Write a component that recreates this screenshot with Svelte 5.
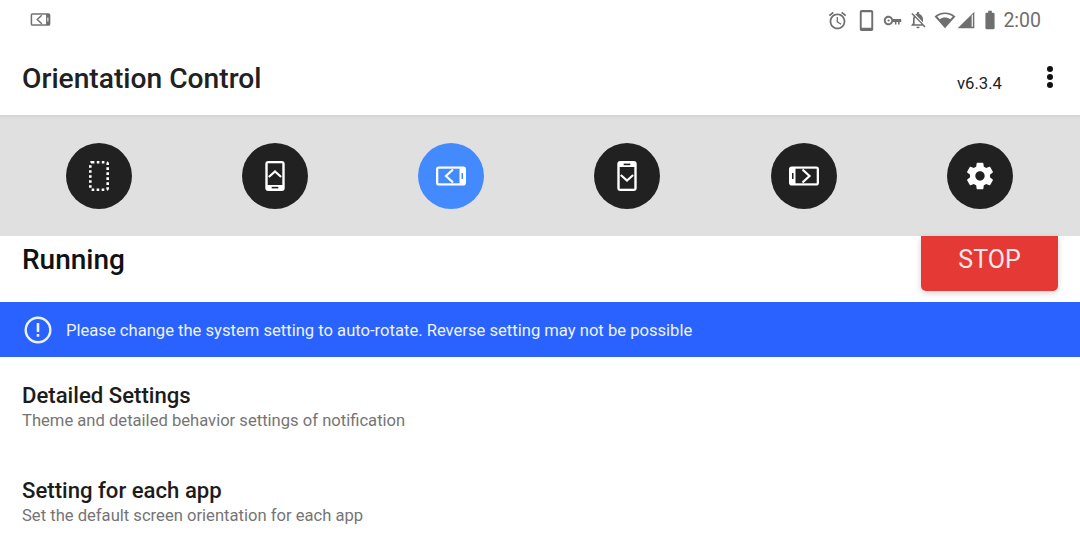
<script lang="ts">
  const modes = [
    { id: 'free', active: false },
    { id: 'up', active: false },
    { id: 'left', active: true },
    { id: 'down', active: false },
    { id: 'right', active: false },
    { id: 'settings', active: false }
  ];
</script>

{#snippet landscape(dir: string)}
  <rect x="1" y="6.500" width="30" height="19" rx="2.800" fill="currentColor" />
  {#if dir === 'left'}
    <rect x="3.300" y="8.700" width="21.200" height="14.600" fill="var(--ic-bg)" />
    <rect x="26.500" y="13" width="1.500" height="6" fill="var(--ic-bg)" />
    <path d="M18 9.500 11 16l7 6.500" stroke="currentColor" stroke-width="2.200" fill="none" />
  {:else}
    <rect x="7.500" y="8.700" width="21.200" height="14.600" fill="var(--ic-bg)" />
    <rect x="4" y="13" width="1.500" height="6" fill="var(--ic-bg)" />
    <path d="M14.500 9.500 21.500 16l-7 6.500" stroke="currentColor" stroke-width="2.200" fill="none" />
  {/if}
{/snippet}

<div class="screen">
  <div class="status">
    <svg class="st-mode" viewBox="0 0 32 32">
      {@render landscape('left')}
    </svg>
    <div class="st-right">
      <svg class="st" viewBox="0 0 24 24"><path d="M22 5.720l-4.600-3.860-1.290 1.530 4.600 3.860L22 5.720zM7.880 3.390L6.600 1.860 2 5.710l1.290 1.530 4.590-3.850zM12.500 8H11v6l4.750 2.850.75-1.230-4-2.370V8zM12 4c-4.970 0-9 4.030-9 9s4.020 9 9 9c4.970 0 9-4.030 9-9s-4.030-9-9-9zm0 16c-3.870 0-7-3.130-7-7s3.130-7 7-7 7 3.130 7 7-3.130 7-7 7z" /></svg>
      <svg class="st phone" viewBox="0 0 24 24"><path d="M17 1H7c-1.100 0-2 .9-2 2v18c0 1.100.9 2 2 2h10c1.100 0 2-.9 2-2V3c0-1.100-.9-2-2-2zm0 18.500H7V3.500h10v16z" /></svg>
      <svg class="st key" viewBox="0 0 24 24"><path d="M12.650 10C11.830 7.670 9.610 6 7 6c-3.310 0-6 2.690-6 6s2.690 6 6 6c2.610 0 4.830-1.670 5.650-4H15v3h2v-3h2v3h2v-3h2v-4H12.650zM7 15.600c-2 0-3.600-1.600-3.600-3.600S5 8.400 7 8.400s3.600 1.600 3.600 3.600S9 15.600 7 15.600zm0-2.200a1.400 1.400 0 1 0 0-2.800 1.400 1.400 0 0 0 0 2.800z" fill-rule="evenodd" /></svg>
      <svg class="st bell" viewBox="0 0 24 24"><path d="M20 18.690L7.840 6.140 5.270 3.490 4 4.760l2.800 2.800v.01c-.52.990-.8 2.160-.8 3.420v5l-2 2v1h13.730l2 2L21 19.720l-1-1.030zM12 22c1.110 0 2-.89 2-2h-4c0 1.110.89 2 2 2zm6-7.320V11c0-3.080-1.640-5.640-4.500-6.320V4c0-.83-.67-1.500-1.500-1.500s-1.500.67-1.500 1.500v.68c-.15.030-.29.080-.42.120-.1.030-.2.070-.3.110-.01 0-.02 0-.3.010-.23.090-.46.200-.68.310 0 0-.01 0-.1.010L18 14.680zM8 17v-6c0-.73.130-1.420.380-2.020L16.400 17H8z" /></svg>
      <svg class="st wifi" viewBox="0 0 24 24"><path d="M12 21 .6 8.100C3.600 5.400 7.600 3.800 12 3.800s8.400 1.600 11.400 4.300L12 21zM3.600 8.300l2.700 3c1.500-1.200 3.500-1.900 5.700-1.900s4.200.7 5.700 1.900l2.700-3C18.200 6.300 15.300 5.400 12 5.400S5.800 6.300 3.600 8.300z" fill-rule="evenodd" /></svg>
      <svg class="st signal" viewBox="0 0 24 24"><path d="M22 22V2L2 22h20zm-1.800-1.800h-1.400V6.500l1.400-1.400v15.100z" fill-rule="evenodd" /></svg>
      <svg class="st batt" viewBox="0 0 24 24"><path d="M15.670 4H14V2h-4v2H8.330C7.600 4 7 4.600 7 5.330v15.330C7 21.400 7.600 22 8.330 22h7.330c.74 0 1.340-.6 1.340-1.330V5.330C17 4.600 16.400 4 15.670 4z" /></svg>
      <span class="clock">2:00</span>
    </div>
  </div>

  <header class="appbar">
    <h1>Orientation Control</h1>
    <span class="version">v6.3.4</span>
    <div class="more"><i></i><i></i><i></i></div>
  </header>

  <nav class="modes">
    {#each modes as m}
      <div class="cell">
        <div class="mode" class:active={m.active}>
          {#if m.id === 'free'}
            <svg viewBox="0 0 32 32" class="ic">
              <rect x="7.300" y="2.300" width="17.400" height="27.400" rx="1.500" fill="none" stroke="currentColor" stroke-width="2.600" stroke-dasharray="2.600 2.400" />
            </svg>
          {:else if m.id === 'up'}
            <svg viewBox="0 0 32 32" class="ic">
              <rect x="6.300" y="1" width="19.400" height="30" rx="3" fill="currentColor" />
              <rect x="8.700" y="3.300" width="14.600" height="21.700" fill="#212121" />
              <path d="M9.800 17 16 11.500l6.200 5.500" fill="none" stroke="currentColor" stroke-width="2.200" />
              <rect x="12.700" y="26.800" width="6.600" height="1.600" fill="#212121" />
            </svg>
          {:else if m.id === 'down'}
            <svg viewBox="0 0 32 32" class="ic">
              <rect x="6.300" y="1" width="19.400" height="30" rx="3" fill="currentColor" />
              <rect x="8.700" y="7" width="14.600" height="21.700" fill="#212121" />
              <path d="M9.800 15 16 20.500l6.200-5.500" fill="none" stroke="currentColor" stroke-width="2.200" />
              <rect x="12.700" y="3.600" width="6.600" height="1.600" fill="#212121" />
            </svg>
          {:else if m.id === 'left' || m.id === 'right'}
            <svg viewBox="0 0 32 32" class="ic" style="--ic-bg: {m.active ? '#448aff' : '#212121'}">
              {@render landscape(m.id)}
            </svg>
          {:else}
            <svg viewBox="0 0 24 24" class="ic">
              <path fill="currentColor" d="M19.430 12.980c.04-.32.07-.64.07-.98s-.03-.66-.07-.98l2.110-1.650c.19-.15.24-.42.120-.64l-2-3.460c-.12-.22-.39-.3-.61-.22l-2.490 1c-.52-.4-1.080-.73-1.690-.98l-.38-2.650C14.460 2.180 14.250 2 14 2h-4c-.25 0-.46.18-.49.42l-.38 2.650c-.61.25-1.170.59-1.690.98l-2.490-1c-.23-.09-.49 0-.61.22l-2 3.460c-.13.22-.07.49.12.64l2.110 1.650c-.04.32-.07.65-.07.98s.03.66.07.98l-2.110 1.650c-.19.15-.24.42-.12.64l2 3.460c.12.22.39.3.61.22l2.490-1c.52.4 1.080.73 1.690.98l.38 2.650c.03.24.24.42.49.42h4c.25 0 .46-.18.49-.42l.38-2.650c.61-.25 1.170-.59 1.690-.98l2.490 1c.23.09.49 0 .61-.22l2-3.460c.12-.22.07-.49-.12-.64l-2.110-1.650zM12 15.500c-1.930 0-3.500-1.570-3.500-3.500s1.570-3.500 3.500-3.500 3.500 1.570 3.500 3.500-1.570 3.500-3.500 3.500z" />
            </svg>
          {/if}
        </div>
      </div>
    {/each}
  </nav>

  <section class="state">
    <h2>Running</h2>
    <button class="stop">STOP</button>
  </section>

  <div class="banner">
    <svg viewBox="0 0 28 28" class="alert">
      <circle cx="14" cy="14" r="12.300" fill="none" stroke="currentColor" stroke-width="2.400" />
      <rect x="12.700" y="7" width="2.600" height="9" rx="0.600" fill="currentColor" />
      <rect x="12.700" y="18" width="2.600" height="2.800" rx="0.600" fill="currentColor" />
    </svg>
    <span>Please change the system setting to auto-rotate. Reverse setting may not be possible</span>
  </div>

  <div class="row">
    <div class="row-title">Detailed Settings</div>
    <div class="row-sub">Theme and detailed behavior settings of notification</div>
  </div>
  <div class="row">
    <div class="row-title">Setting for each app</div>
    <div class="row-sub">Set the default screen orientation for each app</div>
  </div>
</div>

<style>
  :global(body) {
    margin: 0;
    background: #fff;
  }

  .screen {
    width: 1080px;
    height: 540px;
    overflow: hidden;
    font-family: Roboto, "Liberation Sans", sans-serif;
    background: #fff;
  }

  .status {
    height: 40px;
    display: flex;
    align-items: center;
    justify-content: space-between;
    padding: 0 39px 0 30px;
    color: #6f6f6f;
  }

  .st-mode {
    width: 21px;
    height: 21px;
    margin-top: -2px;
    --ic-bg: #fff;
  }

  .st-right {
    display: flex;
    align-items: center;
  }

  .st {
    width: 21px;
    height: 21px;
    fill: #6f6f6f;
    flex: none;
  }

  .phone { margin-left: 7px; width: 23px; height: 23px; }
  .key { margin-left: 5px; width: 19px; height: 19px; }
  .bell { margin-left: 6px; width: 20px; height: 20px; }
  .wifi { margin-left: 6px; width: 22px; height: 22px; }
  .signal { margin-left: 0; width: 20px; height: 20px; }
  .batt { margin-left: 3px; width: 22px; height: 22px; }

  .clock {
    margin-left: 2px;
    font-size: 19.500px;
    color: #6f6f6f;
  }

  .appbar {
    height: 75px;
    display: flex;
    align-items: center;
    padding: 0 27px 0 22px;
  }

  h1 {
    margin: 1px 0 0;
    font-size: 28.200px;
    font-weight: 500;
    color: #212121;
    flex: 1;
  }

  .version {
    font-size: 16.700px;
    color: #222;
    margin: 12px 45px 0 0;
  }

  .more {
    display: flex;
    flex-direction: column;
    gap: 2px;
    margin-top: -1px;
  }

  .more i {
    display: block;
    width: 6px;
    height: 6px;
    border-radius: 50%;
    background: #111;
  }

  .modes {
    height: 121px;
    background: linear-gradient(#d4d4d4, #e0e0e0 4px);
    display: grid;
    grid-template-columns: repeat(6, 1fr);
    padding: 0 12px 0 10.400px;
    box-sizing: border-box;
    align-items: center;
  }

  .cell {
    display: flex;
    justify-content: center;
  }

  .mode {
    width: 66px;
    height: 66px;
    border-radius: 50%;
    background: #212121;
    color: #fff;
    display: flex;
    align-items: center;
    justify-content: center;
  }

  .mode.active {
    background: #448aff;
  }

  .ic {
    width: 32px;
    height: 32px;
  }

  .state {
    height: 66px;
    display: flex;
    justify-content: space-between;
    align-items: flex-start;
    padding: 0 22px;
  }

  h2 {
    margin: 7px 0 0;
    font-size: 28px;
    font-weight: 500;
    color: #111;
  }

  .stop {
    width: 137px;
    height: 55px;
    border: 0;
    border-radius: 0 0 5px 5px;
    background: #e53935;
    color: #fdeaea;
    font-family: inherit;
    font-size: 25px;
    padding: 0 0 8px;
    box-shadow: 0 2px 6px rgba(0, 0, 0, 0.18);
  }

  .banner {
    height: 55px;
    background: #2962ff;
    color: #eef3ff;
    display: flex;
    align-items: center;
    gap: 14px;
    padding-left: 24px;
    font-size: 16.600px;
  }

  .banner span {
    padding-top: 2px;
  }

  .alert {
    width: 28px;
    height: 28px;
    flex: none;
  }

  .row {
    height: 95.480px;
    padding: 26px 22px 0;
    box-sizing: border-box;
  }

  .row-title {
    font-size: 22.150px;
    font-weight: 500;
    color: #1c1c1c;
    line-height: 25px;
  }

  .row-sub {
    font-size: 16.600px;
    color: #757575;
    line-height: 24px;
    margin-top: 1px;
  }
</style>
